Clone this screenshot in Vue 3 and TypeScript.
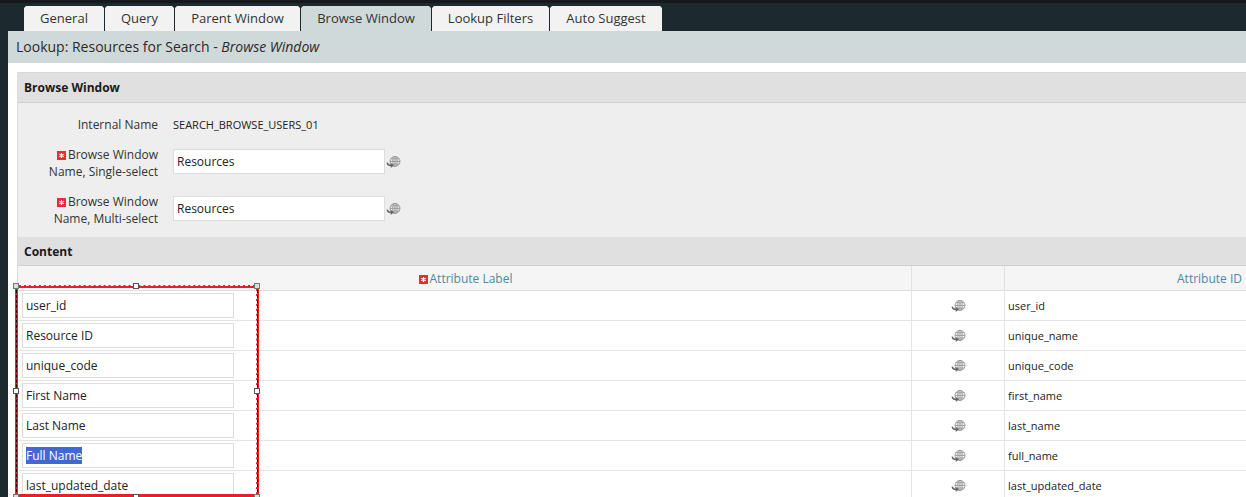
<script setup lang="ts">
const tabs = ['General', 'Query', 'Parent Window', 'Browse Window', 'Lookup Filters', 'Auto Suggest']
const rows: { label: string; id: string; selected?: boolean }[] = [
  { label: 'user_id', id: 'user_id' },
  { label: 'Resource ID', id: 'unique_name' },
  { label: 'unique_code', id: 'unique_code' },
  { label: 'First Name', id: 'first_name' },
  { label: 'Last Name', id: 'last_name' },
  { label: 'Full Name', id: 'full_name', selected: true },
  { label: 'last_updated_date', id: 'last_updated_date' },
]
const handles = ['tl', 'tc', 'tr', 'ml', 'mr', 'bl', 'bc', 'br']
</script>

<template>
  <div class="page">
    <nav class="tabs">
      <div v-for="t in tabs" :key="t" class="tab" :class="{ active: t === 'Browse Window' }">{{ t }}</div>
    </nav>
    <main class="panel">
      <h1 class="title">Lookup: Resources for Search - <em>Browse Window</em></h1>
      <div class="body">
        <section class="section">
          <h2 class="sec-head">Browse Window</h2>
          <div class="form">
            <div class="frow first">
              <div class="lab">Internal Name</div>
              <div class="static">SEARCH_BROWSE_USERS_01</div>
            </div>
            <div class="frow">
              <div class="lab"><svg class="req" viewBox="0 0 9 9"><use href="#req-i" /></svg>Browse Window<br />Name, Single-select</div>
              <div class="field">Resources</div>
              <svg class="globe" viewBox="0 0 15 15"><use href="#globe-i" /></svg>
            </div>
            <div class="frow">
              <div class="lab"><svg class="req" viewBox="0 0 9 9"><use href="#req-i" /></svg>Browse Window<br />Name, Multi-select</div>
              <div class="field">Resources</div>
              <svg class="globe" viewBox="0 0 15 15"><use href="#globe-i" /></svg>
            </div>
          </div>
          <h2 class="sec-head content">Content</h2>
          <div class="thead">
            <div class="th center"><svg class="req" viewBox="0 0 9 9"><use href="#req-i" /></svg>Attribute Label</div>
            <div class="th mid"></div>
            <div class="th right">Attribute ID</div>
          </div>
          <div class="tbody">
            <div v-for="r in rows" :key="r.id" class="trow">
              <div class="cell-label">
                <div class="field wide"><span :class="{ sel: r.selected }">{{ r.label }}</span></div>
              </div>
              <div class="cell-icon"><svg class="globe" viewBox="0 0 15 15"><use href="#globe-i" /></svg></div>
              <div class="cell-id">{{ r.id }}</div>
            </div>
          </div>
        </section>
      </div>
    </main>

    <div class="selection">
      <div class="dash"></div>
      <b v-for="h in handles" :key="h" class="handle" :class="h"></b>
    </div>

    <svg width="0" height="0" class="defs">
      <symbol id="globe-i" viewBox="0 0 15 15">
        <g fill="none" stroke="#9a9a9a" stroke-width="1">
          <circle cx="9" cy="6.4" r="5" />
          <ellipse cx="9" cy="6.4" rx="2.2" ry="5" />
          <path d="M4 6.4h10M4.8 3.8h8.4M4.8 9h8.4M9 1.4v10" />
        </g>
        <path d="M0.5 7.8 C1 10.4 2.6 11.2 4.8 11.2 V13 L8 10.3 L4.8 8 V9.4 C3.4 9.4 2.4 9 1.9 7.4 Z" fill="#666" />
      </symbol>
      <symbol id="req-i" viewBox="0 0 9 9">
        <rect width="9" height="9" fill="#ee2b33" />
        <path d="M4.5 2v5M2.3 3.2l4.4 2.6M6.7 3.2l-4.4 2.6" stroke="#fff" stroke-width="1.1" />
      </symbol>
    </svg>
  </div>
</template>

<style>
html, body { margin: 0; background: #1c2a30; }
</style>

<style scoped>
.page {
  position: relative;
  width: 1246px;
  height: 497px;
  overflow: hidden;
  background: #1c2a30;
  font-family: "Open Sans", sans-serif;
  font-size: 12px;
  color: #222;
  border-top: 3px solid #15191b;
  box-sizing: border-box;
}
.defs { position: absolute; }
.tabs {
  display: flex;
  gap: 1px;
  padding: 3px 0 0 24px;
  height: 25px;
}
.tab {
  height: 25px;
  background: #f2f2f2;
  font-size: 13px;
  line-height: 24px;
  color: #333;
  text-align: center;
  white-space: nowrap;
  clip-path: polygon(2px 0, calc(100% - 2px) 0, 100% 2px, 100% 100%, 0 100%, 0 2px);
}
.tab:nth-child(1) { width: 80px; }
.tab:nth-child(2) { width: 69px; }
.tab:nth-child(3) { width: 125px; }
.tab:nth-child(4) { width: 130px; }
.tab:nth-child(5) { width: 117px; }
.tab:nth-child(6) { width: 112px; }
.active { background: #d0d9d9; }
.panel { margin-left: 8px; background: #fff; height: 470px; }
.title {
  margin: 0;
  height: 32px;
  padding-left: 8px;
  background: #d0d9d9;
  font-size: 14px;
  font-weight: 400;
  line-height: 32px;
  color: #2a2a2a;
}
.title em { font-style: italic; }
.body { padding: 9px 0 0 9px; }
.section { border-left: 1px solid #ddd; }
.sec-head {
  margin: 0;
  height: 29px;
  padding-left: 6px;
  background: #e0e0e0;
  border-top: 1px solid #d6d6d6;
  border-bottom: 1px solid #d0d0d0;
  font-size: 12px;
  font-weight: 700;
  line-height: 29px;
  color: #1a1a1a;
}
.sec-head.content { border-top: 0; height: 28px; line-height: 30px; }
.form { background: #eee; height: 134px; padding-top: 11px; box-sizing: border-box; }
.frow {
  display: flex;
  align-items: flex-start;
  height: 47px;
  color: #333;
}
.frow.first { height: 25px; align-items: center; margin-bottom: 11px; margin-top: -1px; }
.lab { width: 140px; text-align: right; line-height: 17px; margin-right: 15px; margin-top: -3px; }
.frow.first .lab { margin-top: -2px; }
.static { font-size: 11px; color: #222; margin-top: -3px; }
.req {
  display: inline-block;
  width: 9px;
  height: 9px;
  margin-right: 2px;
  vertical-align: -0.5px;
}
.field {
  width: 212px;
  height: 25px;
  box-sizing: border-box;
  background: #fff;
  border: 1px solid #ddd;
  padding-left: 3px;
  line-height: 23px;
  color: #222;
}
.globe { width: 15px; height: 15px; margin: 6px 0 0 1px; flex: none; }
.thead {
  display: grid;
  grid-template-columns: 893px 94px 1fr;
  height: 25px;
  background: #f5f5f5;
  border-bottom: 1px solid #ddd;
  box-sizing: border-box;
}
.th {
  line-height: 25px;
  color: #4a8aa3;
}
.mid { border-left: 1px solid #e2e2e2; border-right: 1px solid #e2e2e2; }
.center { text-align: center; padding-left: 2px; }
.right { text-align: right; padding-right: 4px; width: 241px; box-sizing: border-box; }
.trow {
  display: grid;
  grid-template-columns: 893px 94px 1fr;
  height: 30px;
  border-bottom: 1px solid #e4e4e4;
  box-sizing: border-box;
}
.cell-label { padding: 2px 0 0 4px; }
.wide { padding-left: 3px; }
.sel { background: #4169d2; color: #fff; display: inline-block; line-height: 17px; }
.cell-icon { border-left: 1px solid #e4e4e4; border-right: 1px solid #e4e4e4; text-align: center; }
.cell-icon .globe { margin: 8px 0 0; }
.cell-id { padding-left: 3px; line-height: 30px; font-size: 11px; color: #222; }
.selection {
  position: absolute;
  left: 15px;
  top: 282px;
  width: 244px;
  height: 212px;
  box-sizing: border-box;
  border: 3px solid #ee1c25;
}
.dash {
  position: absolute;
  inset: -3px -2px;
  border-left: 1px dashed #111;
  border-right: 1px dashed #111;
  border-top: 1px dashed #fff;
}
.dash::after {
  content: "";
  position: absolute;
  inset: 0 0 0 1px;
  border-left: 1px dashed #fff;
  border-right: 1px dashed #fff;
}
.handle {
  position: absolute;
  width: 6px;
  height: 6px;
  background: #fff;
  border: 1px solid #555;
  box-sizing: border-box;
}
.tl, .tr, .bl, .br { border-color: #777; background: #ddd; }
.tl, .tc, .tr { top: -5px; }
.ml, .mr { top: 100px; }
.bl, .bc, .br { bottom: -6px; }
.tl, .ml, .bl { left: -5px; }
.tc, .bc { left: 115px; }
.tr, .mr, .br { right: -4px; }
</style>
